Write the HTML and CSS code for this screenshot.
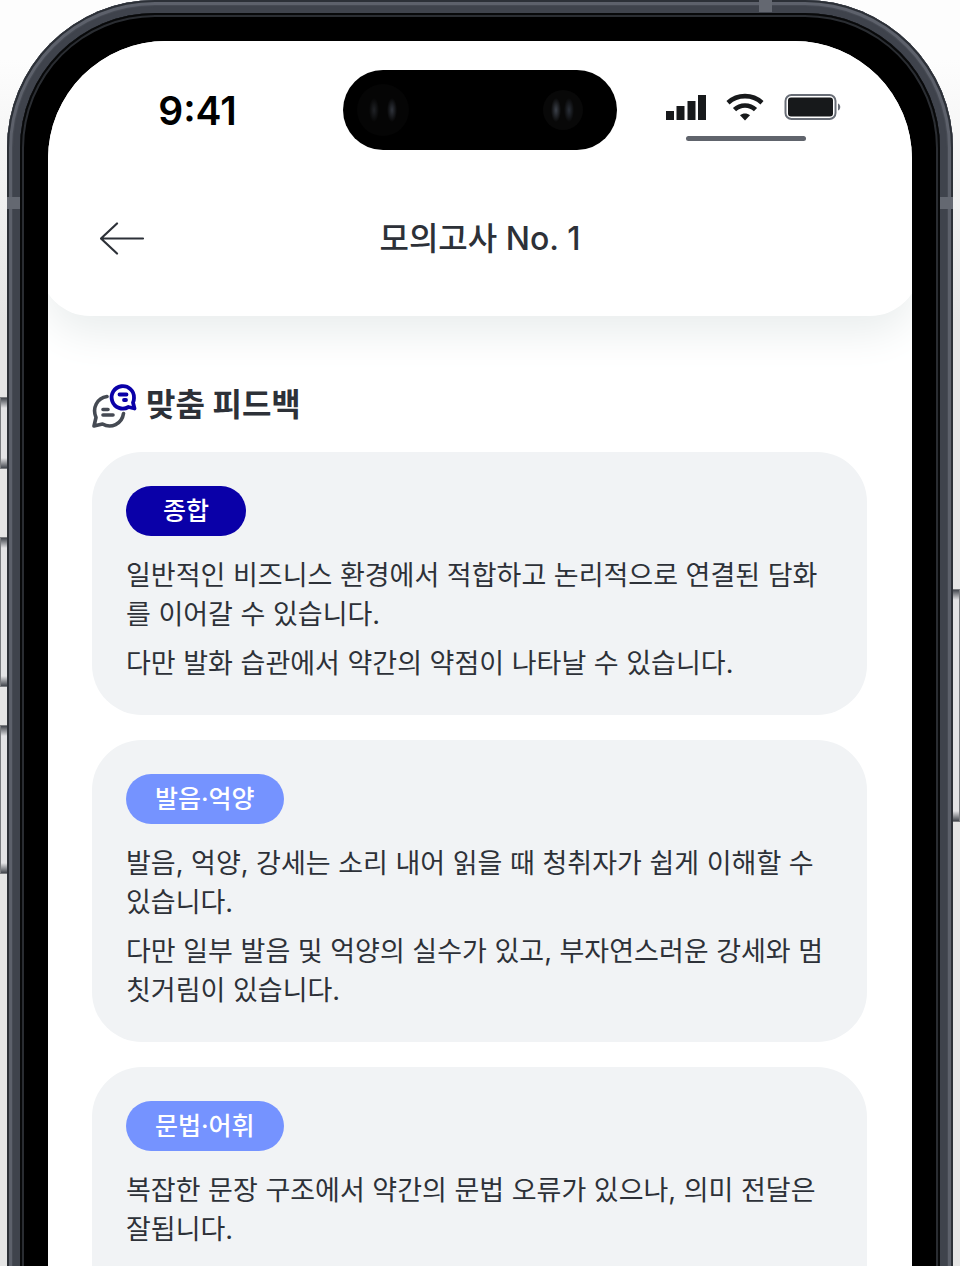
FILE: index.html
```html
<!DOCTYPE html>
<html lang="ko">
<head>
<meta charset="utf-8">
<meta name="viewport" content="width=device-width, initial-scale=1">
<title>모의고사 No. 1</title>
<link rel="stylesheet" href="styles.css">
</head>
<body>
<div class="stage">
  <span class="side-key side-key--action"></span>
  <span class="side-key side-key--up"></span>
  <span class="side-key side-key--down"></span>
  <span class="side-key side-key--power"></span>
  <div class="phone">
    <span class="antenna antenna--top"></span>
    <span class="antenna antenna--left"></span>
    <span class="antenna antenna--right"></span>
    <div class="bezel">
      <div class="screen">
        <div class="top">
          <div class="status">
            <time class="clock">9:41</time>
            <div class="island"><span class="lens lens--wide"></span><span class="lens"></span></div>
            <div class="indicators">
              <svg class="glyphs" width="176" height="28" viewBox="0 0 176 28" aria-hidden="true">
                <g fill="#17191b">
                  <path d="M0 18h8v9H0zM10.500 13h8v14h-8zM21.500 8h8v19h-8zM32 2h8v25h-8z"/>
                  <path d="M79 27.500l-5-5.200c2.800-2.400 7.200-2.400 10 0z"/>
                </g>
                <g fill="none" stroke="#17191b" stroke-width="4.600">
                  <path d="M62 9.700c9.600-8.800 24.400-8.800 34 0"/>
                  <path d="M68.500 16.700c5.800-5.600 15.200-5.600 21 0"/>
                </g>
                <rect x="119.500" y="2" width="50" height="24" rx="6" fill="none" stroke="#686d76" stroke-width="2"/>
                <rect x="122" y="4.500" width="45" height="19" rx="3" fill="#17191b"/>
                <path d="M172 10.500c3 1 3 6 0 7z" fill="#686d76"/>
              </svg>
              <span class="grip"></span>
            </div>
          </div>
          <header class="nav">
            <button class="back" type="button" aria-label="뒤로">
              <svg width="46" height="34" viewBox="0 0 46 34" fill="none" stroke="#2d3138" stroke-width="2.200" stroke-linecap="round" stroke-linejoin="round" aria-hidden="true"><path d="M43 16.500H1M17 1.500L1 16.500l16 15"/></svg>
            </button>
            <h1 class="title">모의고사 No. 1</h1>
          </header>
        </div>
        <main class="content">
          <h2 class="heading">
            <svg width="46" height="46" viewBox="0 0 46 46" fill="none" stroke-linecap="round" stroke-linejoin="round" aria-hidden="true">
              <g stroke="#454a53" stroke-width="3.600">
                <path d="M15 13.500C5 15 0 25 4 34.500L2 43l8.500-2C19 46 30 41 31.500 30.500"/>
                <path d="M11 26.500h5M11 32h10"/>
              </g>
              <g stroke="#0a00a8" stroke-width="3.800">
                <path d="M42 15A11.200 11.200 0 1 0 36.500 24L42.500 25.500 41 19.500q1-2 1-4.500z"/>
                <path d="M27.500 11.500h7M32 17h2"/>
              </g>
            </svg>
            <span>맞춤 피드백</span>
          </h2>
          <section class="card">
            <h3 class="tag tag--main">종합</h3>
            <p>일반적인 비즈니스 환경에서 적합하고 논리적으로 연결된 담화를 이어갈 수 있습니다.</p>
            <p>다만 발화 습관에서 약간의 약점이 나타날 수 있습니다.</p>
          </section>
          <section class="card">
            <h3 class="tag">발음·억양</h3>
            <p>발음, 억양, 강세는 소리 내어 읽을 때 청취자가 쉽게 이해할 수 있습니다.</p>
            <p>다만 일부 발음 및 억양의 실수가 있고, 부자연스러운 강세와 멈칫거림이 있습니다.</p>
          </section>
          <section class="card">
            <h3 class="tag">문법·어휘</h3>
            <p>복잡한 문장 구조에서 약간의 문법 오류가 있으나, 의미 전달은 잘됩니다.</p>
          </section>
        </main>
      </div>
    </div>
  </div>
</div>
</body>
</html>
```
FILE: styles.css
```css
* { box-sizing: border-box; }

body {
  margin: 0;
  font-family: Inter, "Noto Sans CJK KR", sans-serif;
  color: #2d3138;
  background: #e5e5e5;
}

h1, h2, h3, p { margin: 0; }

.stage {
  position: relative;
  height: 100vh;
  overflow: hidden;
  padding: 0 7px;
  background: linear-gradient(#fdfdfd 0, #fdfdfd 60px, #e5e5e5 320px);
}

/* Device frame */
.phone {
  position: relative;
  padding: 13px 13px 0;
  border-radius: 148px 148px 0 0;
  background: #3f434c;
  box-shadow: inset 0 0 0 2px #2c3037, inset 0 0 0 5px #5d616b, inset 0 0 1px 6px #484c55;
}

.bezel {
  padding: 28px 28px 0;
  border-radius: 135px 135px 0 0;
  background: #000;
  box-shadow: inset 0 0 0 2px #08090a, inset 0 0 0 4px #2a2d32;
}

.screen {
  overflow: hidden;
  border-radius: 118px 118px 0 0;
  background: #fff;
}

.antenna {
  position: absolute;
  width: 13px;
  height: 12px;
  background: #646871;
}
.antenna--top { top: 0; right: 181px; }
.antenna--left { top: 197px; left: 0; }
.antenna--right { top: 197px; right: 0; }

.side-key {
  position: absolute;
  left: 0;
  width: 8px;
  border: 1px solid #7a7c80;
  background: linear-gradient(#42464d, #e3e3e5 10px, #e3e3e5 calc(100% - 10px), #42464d);
}
.side-key--action { top: 397px; height: 72px; }
.side-key--up { top: 537px; height: 150px; }
.side-key--down { top: 725px; height: 149px; }
.side-key--power { top: 589px; right: 0; left: auto; height: 233px; }

/* Status bar and title */
.top {
  margin: 0 -8px;
  padding: 29px 60px 53px;
  border-radius: 0 0 50px 50px;
  background: #fff;
  box-shadow: 0 24px 40px -6px #eaeeee;
}

.status {
  display: grid;
  grid-template-columns: 1fr 274px 1fr;
  align-items: center;
}

.clock {
  justify-self: center;
  padding: 2px 48px 0 0;
  font-size: 39px;
  font-weight: 600;
  line-height: 48px;
  color: #000;
}

.island {
  display: flex;
  align-items: center;
  justify-content: space-between;
  height: 80px;
  padding: 0 34px 0 14px;
  border-radius: 40px;
  background: #000;
}

.lens {
  width: 40px;
  height: 40px;
  border-radius: 50%;
  background:
    radial-gradient(ellipse 5px 12px at 13px 50%, #3c414a, transparent),
    radial-gradient(ellipse 5px 12px at 26px 50%, #2a2f38, transparent),
    #080808;
}
.lens--wide {
  width: 52px;
  height: 52px;
  background:
    radial-gradient(ellipse 5px 12px at 17px 50%, #202226, transparent),
    radial-gradient(ellipse 5px 12px at 35px 50%, #30343c, transparent),
    #050505;
}

.indicators {
  display: flex;
  flex-direction: column;
  align-items: center;
  justify-self: center;
  gap: 15px;
  padding: 13px 0 0 30px;
}
.glyphs { display: block; }
.grip {
  width: 120px;
  height: 5px;
  margin-right: 16px;
  border-radius: 3px;
  background: #60646c;
}

.nav {
  display: grid;
  grid-template-columns: 46px 1fr 46px;
  align-items: center;
  padding-top: 65px;
}
.back {
  display: flex;
  padding: 0;
  border: 0;
  background: none;
}
.title {
  text-align: center;
  font-size: 32px;
  font-weight: 500;
  line-height: 48px;
}

/* Feedback list */
.content {
  display: flex;
  flex-direction: column;
  gap: 25px;
  min-height: 100vh;
  padding: 67px 45px 0 44px;
}

.heading {
  display: flex;
  align-items: center;
  gap: 8px;
  font-size: 32px;
  font-weight: 700;
  line-height: 44px;
}
.heading svg { margin-bottom: -2px; }

.card {
  display: flex;
  flex-direction: column;
  align-items: flex-start;
  gap: 10px;
  padding: 34px 34px 32px;
  border-radius: 50px;
  background: #f1f3f5;
  font-size: 27px;
  line-height: 39px;
  word-break: break-all;
}
.card:last-child { flex: 1; }

.tag {
  margin-bottom: 10px;
  padding: 0 29px;
  border-radius: 25px;
  background: #7593ff;
  color: #fff;
  font-size: 25px;
  font-weight: 500;
  line-height: 50px;
}
.tag--main {
  padding: 0 37px;
  background: #0a00a8;
}
```
